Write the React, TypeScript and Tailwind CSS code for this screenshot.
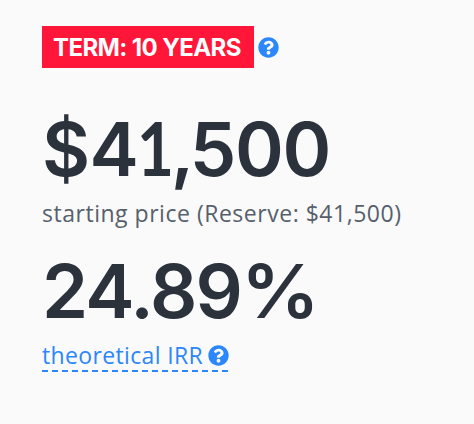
import React from "react";

function HelpIcon() {
  return (
    <svg className="block h-[21px] w-[21px] shrink-0" viewBox="0 0 512 512" fill="#2b87fb" aria-hidden="true">
      <path d="M504 256c0 136.997-111.043 248-248 248S8 392.997 8 256C8 119.083 119.043 8 256 8s248 111.083 248 248zM262.655 90c-54.497 0-89.255 22.957-116.549 63.758-3.536 5.286-2.353 12.415 2.715 16.258l34.699 26.31c5.205 3.947 12.621 3.008 16.665-2.122 17.864-22.658 30.113-35.797 57.303-35.797 20.429 0 45.698 13.148 45.698 32.958 0 14.976-12.363 22.667-32.534 33.976C247.128 238.528 216 254.941 216 296v4c0 6.627 5.373 12 12 12h56c6.627 0 12-5.373 12-12v-1.333c0-28.462 83.186-29.647 83.186-106.667 0-58.002-60.165-102-116.531-102zM256 338c-25.365 0-46 20.635-46 46 0 25.364 20.635 46 46 46s46-20.636 46-46c0-25.365-20.635-46-46-46z" />
    </svg>
  );
}

export default function App() {
  return (
    <main className="flex h-[424px] w-[474px] flex-col items-start overflow-hidden bg-[#fafafa] pl-[42px] pt-[26px] font-['Open_Sans',sans-serif] text-[#2b323c]">
      <div className="flex items-center gap-1">
        <span className="flex h-[42px] w-[212px] items-center whitespace-nowrap bg-[#ff1639] pl-[11px] pt-[2px] font-['Inter',sans-serif] text-[24px] font-bold tracking-[-0.6px] text-white">
          TERM: 10 YEARS
        </span>
        <HelpIcon />
      </div>
      <div className="mt-[41px] h-[76px] whitespace-nowrap font-['Inter',sans-serif] text-[74px] font-semibold leading-[76px] tracking-[-0.6px]">
        $4<span className="-ml-[4px] -mr-[3px] inline-block scale-x-[0.85] font-['Lato',sans-serif] text-[75px] font-bold leading-[76px] tracking-[-4px]">1</span>
        <span className="tracking-[-4.5px]">,</span>
        <span className="tracking-[-1.4px]">500</span>
      </div>
      <div className="mt-[10px] h-[36px] whitespace-nowrap text-[23px] leading-[36px] tracking-[0.52px] text-[#56606c]">starting price (Reserve: $41,500)</div>
      <div className="mt-[22px] h-[76px] whitespace-nowrap font-['Inter',sans-serif] text-[74px] font-semibold leading-[76px] tracking-[-1.8px]">
        24.89<span className="inline-block origin-left scale-x-[1.06]">%</span>
      </div>
      <div className="mt-[9px] h-[34px] bg-[repeating-linear-gradient(90deg,#2b87fb_0_6px,transparent_6px_10px)] bg-[length:100%_2px] bg-bottom bg-no-repeat text-[23px] text-[#2b87fb]">
        <div className="flex h-[32px] items-center gap-[5px] pt-[2px]">
          <span className="whitespace-nowrap tracking-[0.35px]">theoretical IRR</span>
          <HelpIcon />
        </div>
      </div>
    </main>
  );
}
